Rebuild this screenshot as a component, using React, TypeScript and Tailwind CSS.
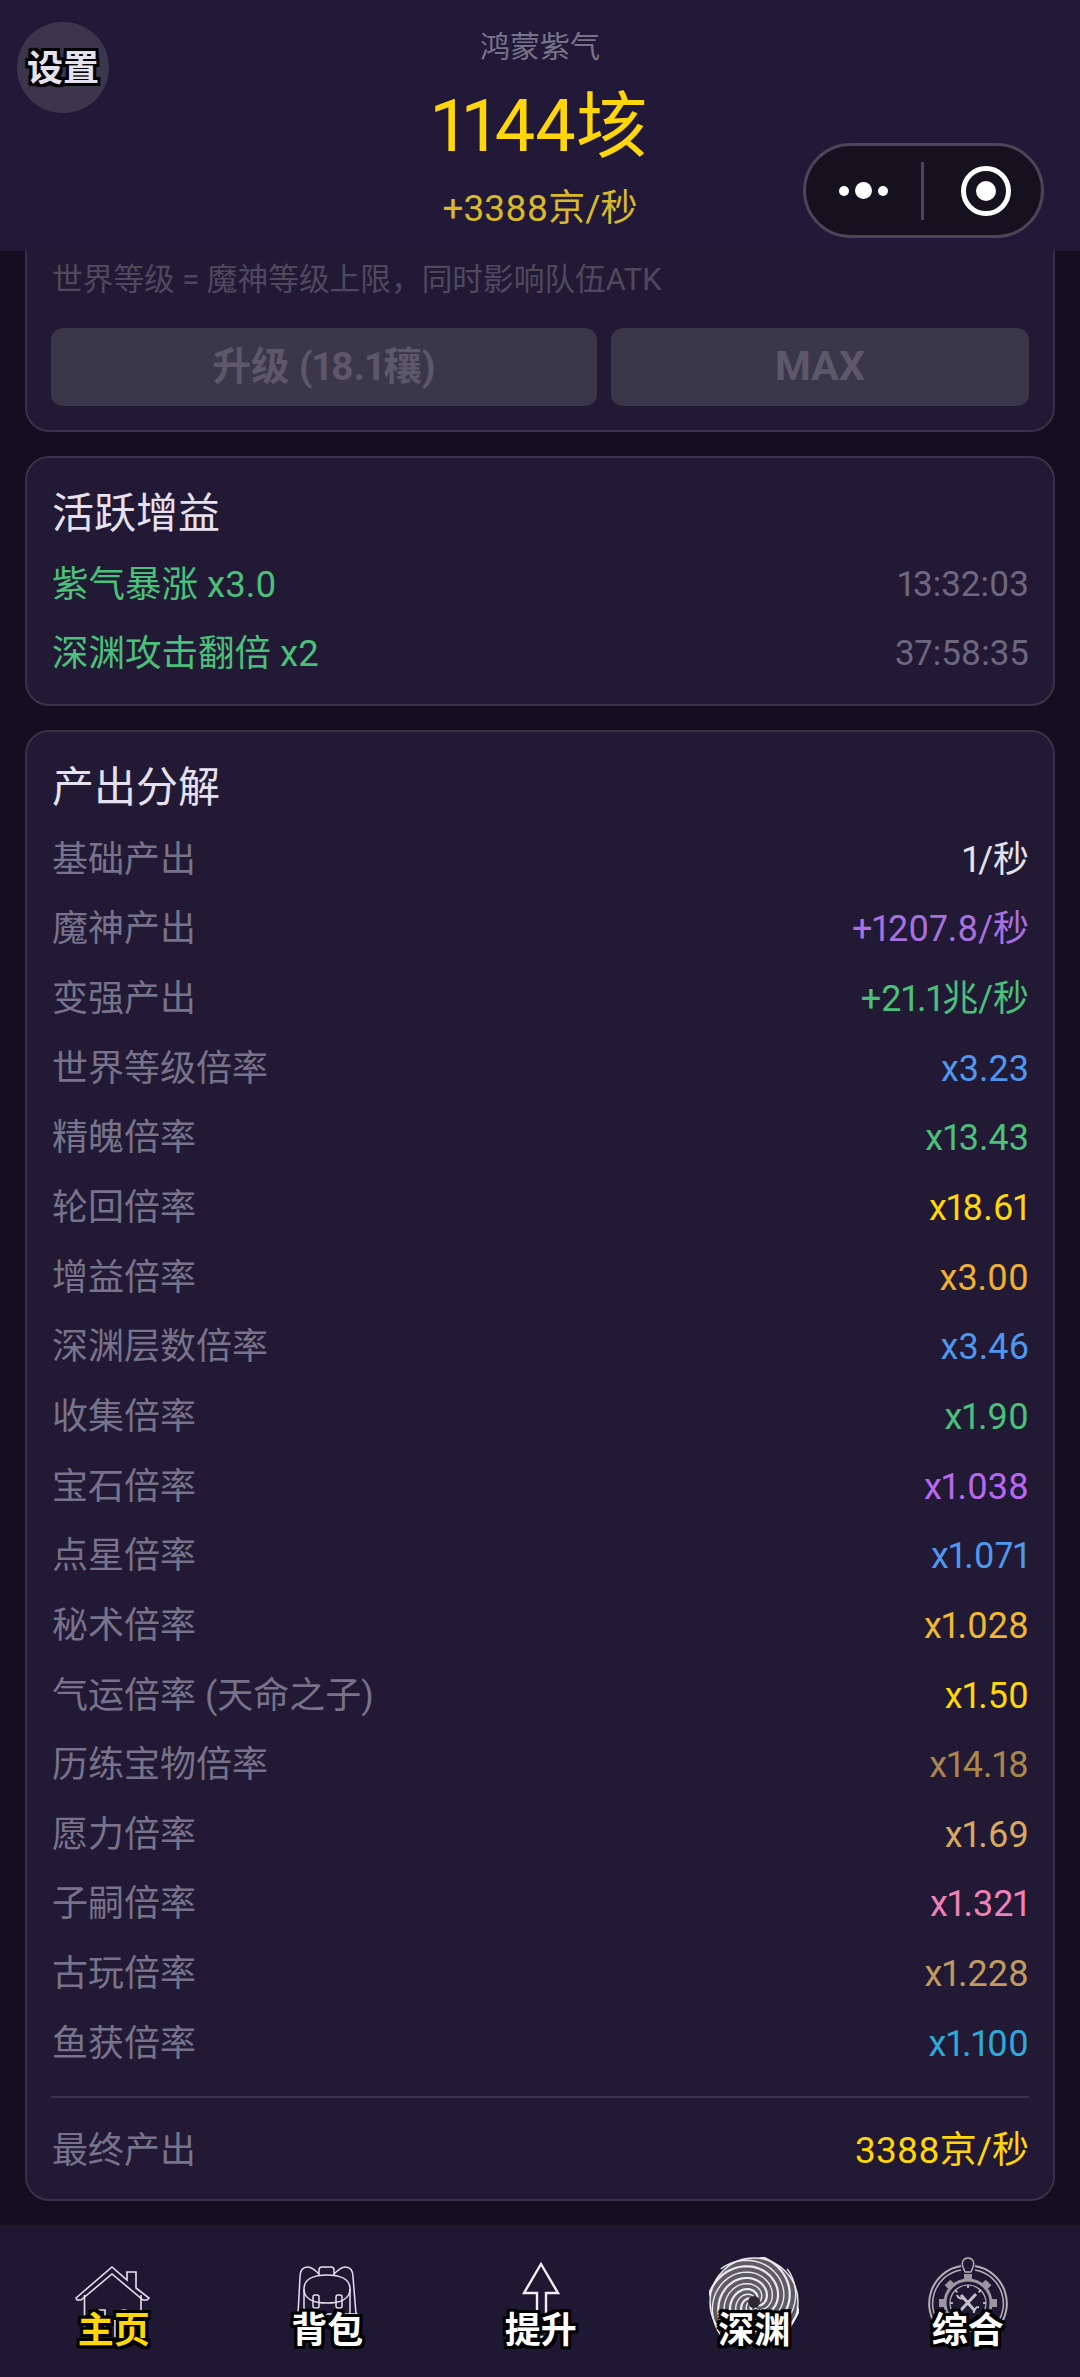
const font = "font-['Roboto','Noto_Sans_CJK_SC',sans-serif] proportional-nums"

const rows = [
  { label: '基础产出', value: '1/秒', color: 'text-[#e6e1ef]' },
  { label: '魔神产出', value: '+1207.8/秒', color: 'text-[#a970e0]' },
  { label: '变强产出', value: '+21.1兆/秒', color: 'text-[#4ac07a]' },
  { label: '世界等级倍率', value: 'x3.23', color: 'text-[#4f96ee]' },
  { label: '精魄倍率', value: 'x13.43', color: 'text-[#4ac07a]' },
  { label: '轮回倍率', value: 'x18.61', color: 'text-[#ffd60a]' },
  { label: '增益倍率', value: 'x3.00', color: 'text-[#f0b030]' },
  { label: '深渊层数倍率', value: 'x3.46', color: 'text-[#4f96ee]' },
  { label: '收集倍率', value: 'x1.90', color: 'text-[#4ac07a]' },
  { label: '宝石倍率', value: 'x1.038', color: 'text-[#b868f0]' },
  { label: '点星倍率', value: 'x1.071', color: 'text-[#4f96ee]' },
  { label: '秘术倍率', value: 'x1.028', color: 'text-[#f0b830]' },
  { label: '气运倍率 (天命之子)', value: 'x1.50', color: 'text-[#ffd60a]' },
  { label: '历练宝物倍率', value: 'x14.18', color: 'text-[#a8864e]' },
  { label: '愿力倍率', value: 'x1.69', color: 'text-[#d8a860]' },
  { label: '子嗣倍率', value: 'x1.321', color: 'text-[#f080b8]' },
  { label: '古玩倍率', value: 'x1.228', color: 'text-[#c09a60]' },
  { label: '鱼获倍率', value: 'x1.100', color: 'text-[#30a8d8]' },
]

const outline = '[text-shadow:-3px_-3px_0_#000,3px_-3px_0_#000,-3px_3px_0_#000,3px_3px_0_#000,0_-3px_0_#000,0_3px_0_#000,-3px_0_0_#000,3px_0_0_#000]'

// one spiral arm from the rim of the abyss towards its centre
function spiralPath(turn: number) {
  const pts: string[] = []
  for (let i = 0; i <= 48; i++) {
    const t = i / 48
    const r = 43 * (1 - t) + 4
    const a = turn + t * 5.6
    pts.push(`${(45 + r * Math.cos(a)).toFixed(1)} ${(45 + r * Math.sin(a)).toFixed(1)}`)
  }
  return 'M' + pts.join(' L')
}

const spiralArms = [0, 1, 2, 3, 4, 5, 6, 7].map((i) => spiralPath((i * Math.PI) / 4))
const gearTeeth = [0, 45, 90, 135, 180, 225, 270, 315]

function HomeIcon() {
  return (
    <svg viewBox="0 0 90 90" className="w-[90px] h-[90px]" fill="none" stroke="#e6e1ef" strokeWidth="1.6">
      <path d="M7 41 L43 10 L58 23 V15 H67 V31 L80 41 L78 43 H74 L43 17 L12 43 H8 Z" />
      <path d="M15.5 38 V80 M72 38 V80" />
      <path d="M24 53 H36 V72 H24 Z M24 60 H36" />
      <path d="M46 80 V61 a9 8 0 0 1 18 0 V80" />
    </svg>
  )
}

function BagIcon() {
  return (
    <svg viewBox="0 0 90 90" className="w-[90px] h-[90px]" fill="none" stroke="#e6e1ef" strokeWidth="1.5">
      <path d="M37 18 V13 a3 3 0 0 1 3 -3 H49 a3 3 0 0 1 3 3 V18" />
      <path d="M26 10 C20 10 18 14 18 20 L16 57 M63 10 C69 10 71 14 71 20 L74 57" />
      <path d="M26 10 C29 10 34 14 37 17 M63 10 C60 10 55 14 52 17" />
      <path d="M22 32 C22 22 32 18 45 18 C58 18 68 22 68 32 C68 42 58 46 45 46 C32 46 22 42 22 32 Z" />
      <path d="M22 32 V57 M68 32 V57" />
      <rect x="31" y="38" width="6" height="13" rx="2" />
      <rect x="54" y="38" width="6" height="13" rx="2" />
      <path d="M15 57 H76" />
    </svg>
  )
}

function ArrowIcon() {
  return (
    <svg viewBox="0 0 90 90" className="w-[90px] h-[90px]" fill="none" stroke="#f2eff6" strokeWidth="2.4">
      <path d="M45 7 L62 36 H50 V80 H41 V36 H28 Z" />
    </svg>
  )
}

function AbyssIcon() {
  return (
    <svg viewBox="0 0 90 90" className="w-[90px] h-[90px]" fill="none" stroke="#ecebf0">
      <circle cx="45" cy="45" r="44" fill="#5e5b65" strokeWidth="1.4" />
      {spiralArms.map((d, i) => (
        <path key={i} d={d} strokeWidth={i % 2 ? 1.4 : 2.2} />
      ))}
      <circle cx="45" cy="45" r="6" fill="#2c2933" stroke="none" />
    </svg>
  )
}

function GearIcon() {
  return (
    <svg viewBox="0 0 90 90" className="w-[90px] h-[90px]" fill="none" stroke="#b4b1ba" strokeWidth="1.5">
      <path d="M16 72 A38 38 0 0 1 38 9 M52 9 A38 38 0 0 1 74 72" strokeWidth="2" />
      <path d="M19 70 A34 34 0 0 1 38 13 M52 13 A34 34 0 0 1 71 70" />
      <path d="M45 1 C50 1 52 6 50 10 L48 15 H42 L40 10 C38 6 40 1 45 1 Z" />
      <circle cx="45" cy="46" r="23" strokeWidth="3" stroke="#9a97a2" />
      <circle cx="45" cy="46" r="18" strokeWidth="1.2" />
      {gearTeeth.map((a) => (
        <g key={a} transform={`rotate(${a} 45 46)`}>
          <rect x="41" y="17" width="8" height="6" fill="#9a97a2" stroke="none" />
          <path d="M45 28 V31" strokeWidth="1.5" stroke="#dcd9e2" />
        </g>
      ))}
      <path d="M38 38 L52 54 M53 37 L37 54" strokeWidth="3" stroke="#c4c1ca" />
      <path d="M34 38 a5 5 0 0 0 7 3 M51 56 a5 5 0 0 1 5 -6" strokeWidth="2" stroke="#c4c1ca" />
    </svg>
  )
}

const navItems = [
  { label: '主页', icon: <HomeIcon />, active: true },
  { label: '背包', icon: <BagIcon /> },
  { label: '提升', icon: <ArrowIcon /> },
  { label: '深渊', icon: <AbyssIcon /> },
  { label: '综合', icon: <GearIcon /> },
]

export default function App() {
  return (
    <div className={`relative w-[1080px] h-[2377px] overflow-hidden bg-[#130f20] ${font}`}>
      {/* Header */}
      <header className="relative h-[251px] bg-[#211937] flex flex-col items-center">
        <div className="mt-[26px] text-[30px] leading-[42px] text-[#77738a]">鸿蒙紫气</div>
        <div className="mt-[13px] text-[72px] leading-[92px] text-[#ffd60a]">1144垓</div>
        <div className="mt-[13px] text-[37px] leading-[46px] text-[#d8b92c]">+3388京/秒</div>
        <div className="absolute left-[17px] top-[22px] w-[92px] h-[91px] rounded-full bg-[#3b364b] flex items-center justify-center pt-[2px]">
          <span className={`text-[36px] font-bold text-[#e6e1ef] ${outline}`}>设置</span>
        </div>
        {/* WeChat capsule */}
        <div className="absolute left-[803px] top-[143px] w-[241px] h-[95px] rounded-full bg-[#15111f] border-[3px] border-[#4a4658] flex items-center">
          <div className="w-[115px] flex items-center justify-center gap-[6px]">
            <span className="w-[10px] h-[10px] rounded-full bg-white" />
            <span className="w-[17px] h-[17px] rounded-full bg-white" />
            <span className="w-[10px] h-[10px] rounded-full bg-white" />
          </div>
          <div className="w-[3px] h-[58px] bg-[#4a4658]" />
          <div className="flex-1 flex items-center justify-center pl-[6px]">
            <div className="w-[50px] h-[50px] rounded-full border-[5px] border-white flex items-center justify-center">
              <span className="w-[20px] h-[20px] rounded-full bg-white" />
            </div>
          </div>
        </div>
      </header>

      <main className="px-[25px] flex flex-col gap-[24px]">
        {/* World level card, scrolled under the header */}
        <section className="h-[181px] rounded-b-[24px] border-2 border-t-0 border-[#37324a] bg-[#221a34] pl-[25px] pr-[24px] pt-[9px]">
          <div className="text-[30.7px] leading-[40px] text-[#4e4a5e]">世界等级 = 魔神等级上限，同时影响队伍ATK</div>
          <div className="mt-[28px] -ml-px flex gap-[14px]">
            <div className="w-[546px] h-[78px] rounded-[12px] bg-[#3b374a] flex items-center justify-center text-[38.5px] font-bold text-[#5c5869]">升级 (18.1穰)</div>
            <div className="flex-1 h-[78px] rounded-[12px] bg-[#3b374a] flex items-center justify-center text-[41px] font-bold text-[#5c5869]">MAX</div>
          </div>
        </section>

        {/* Active buffs */}
        <section className="h-[250px] rounded-[24px] border-2 border-[#37324a] bg-[#221a34] pl-[25px] pr-[24px] pt-[28px]">
          <div className="text-[42px] leading-[56px] text-[#e6e1ef]">活跃增益</div>
          <div className="mt-[19px] flex justify-between items-center h-[48px] text-[36.5px]">
            <span className="text-[#4ac07a]">紫气暴涨 x3.0</span>
            <span className="text-[35px] text-[#6d6880]">13:32:03</span>
          </div>
          <div className="mt-[21px] flex justify-between items-center h-[48px] text-[36.5px]">
            <span className="text-[#4ac07a]">深渊攻击翻倍 x2</span>
            <span className="text-[35px] text-[#6d6880]">37:58:35</span>
          </div>
        </section>

        {/* Output breakdown */}
        <section className="rounded-[24px] border-2 border-[#37324a] bg-[#221a34] pl-[25px] pr-[24px] pt-[28px] h-[1471px]">
          <div className="text-[42px] leading-[56px] text-[#e6e1ef]">产出分解</div>
          <div className="mt-[9px]">
            {rows.map((row) => (
              <div key={row.label} className="flex justify-between items-center h-[69.65px] text-[36px]">
                <span className="text-[#77738a]">{row.label}</span>
                <span className={row.color}>{row.value}</span>
              </div>
            ))}
          </div>
          <div className="mt-[17px] -ml-px border-t-2 border-[#37324a] flex justify-between items-center pl-px h-[108px] text-[36px]">
            <span className="text-[#77738a]">最终产出</span>
            <span className="text-[37px] text-[#ffd60a]">3388京/秒</span>
          </div>
        </section>
      </main>

      {/* Bottom nav */}
      <nav className="absolute left-0 right-0 bottom-0 h-[152px] bg-[#1f1833] flex pl-[7px] pr-[5.5px]">
        {navItems.map((item) => (
          <div key={item.label} className="relative flex-1 flex justify-center pt-[32px]">
            {item.icon}
            <span className={`absolute top-[81px] text-[36px] leading-[50px] font-bold ${item.active ? 'text-[#ffd60a]' : 'text-white'} ${outline}`}>{item.label}</span>
          </div>
        ))}
      </nav>
    </div>
  )
}
